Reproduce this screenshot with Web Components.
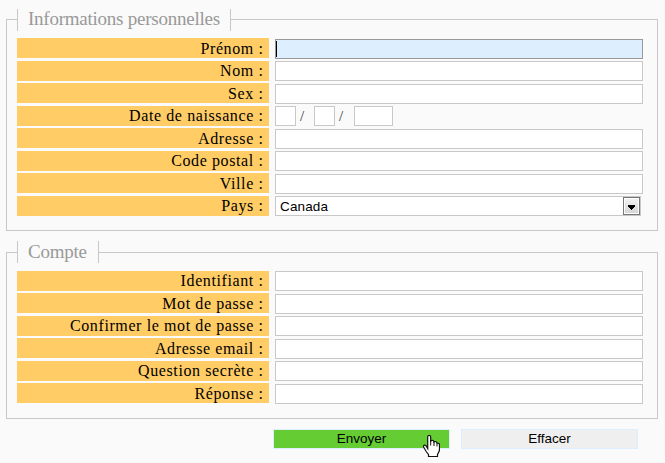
<!DOCTYPE html>
<html lang="fr">
<head>
<meta charset="utf-8">
<title>Inscription</title>
<style>
html,body{margin:0;background:#fafafa;width:665px;height:463px;overflow:hidden}
</style>
</head>
<body>
<signup-form></signup-form>
<script>
const define = (name, html, setup) => {
  const t = document.createElement('template');
  t.innerHTML = html;
  customElements.define(name, class extends HTMLElement {
    constructor() {
      super();
      this.attachShadow({mode: 'open'}).appendChild(t.content.cloneNode(true));
    }
    connectedCallback() { if (setup) setup(this, this.shadowRoot); }
  });
};

define('text-field', `
<style>
:host{display:block;position:relative;width:368px;height:20px}
input{display:block;box-sizing:border-box;width:100%;height:100%;margin:0;padding:0 4px;border:1px solid #c8c8c8;border-radius:0;background:#fff;outline:0;font:13.5px "Liberation Sans",Arial,sans-serif}
i{display:none}
:host([active]) input{border-color:#999;background:#def}
:host([active]) i{display:block;position:absolute;left:1px;top:2px;width:1px;height:16px;background:#000}
</style><input type="text"><i></i>`);

define('date-field', `
<style>
:host{display:flex;height:20px;font:15px/20px "Liberation Serif",serif;color:#333}
.s{width:21px}.l{width:39px}
span{width:18px;box-sizing:border-box;padding-left:4px}
span+text-field+span{width:19px}
</style><text-field class="s"></text-field><span>/</span><text-field class="s"></text-field><span>/</span><text-field class="l"></text-field>`);

define('select-field', `
<style>
:host{display:flex;box-sizing:border-box;width:366px;height:20px;border:1px solid #c8c8c8;background:#fff;justify-content:space-between;font:13.5px/19px "Liberation Sans",Arial,sans-serif;color:#000;padding-left:4px}
.v{letter-spacing:.15px}
b{display:block;box-sizing:border-box;width:17px;height:18px;border:1px solid #777;background:linear-gradient(#f4f4f4,#d4d4d4);box-shadow:inset 0 0 0 1px #fff}
svg{display:block}
</style><span class="v"><slot></slot></span><b><svg width="15" height="16" shape-rendering="crispEdges"><path d="M4 7h7v2h-1v1h-1v1h-1v1h-1v-1h-1v-1h-1v-1h-1z"/></svg></b>`);

define('form-row', `
<style>
:host{display:flex;gap:6px;height:22px;align-items:flex-start}
:host([half]){height:23px}
:host([half]) ::slotted(*){margin-top:1px}
label{display:block;box-sizing:border-box;width:252px;height:20px;padding-right:5.500px;background:#fc6;color:#000;text-align:right;font:16px/20px "Liberation Serif","Times New Roman",serif;letter-spacing:.6px;white-space:nowrap}
:host([half]) label{line-height:22px}
</style><label></label><slot></slot>`, (el, root) => {
  root.querySelector('label').textContent = el.getAttribute('label') + ' :';
});

define('field-group', `
<style>
:host{display:block;box-sizing:border-box;width:652px}
fieldset{box-sizing:border-box;width:100%;height:100%;min-width:0;margin:0;padding:0 10px;border:1px solid #c8c8c8}
legend{box-sizing:border-box;height:22px;width:var(--legend);padding:0 0 0 10px;border:solid #c8c8c8;border-width:0 1px;color:#999;font:19px/var(--line) "Liberation Serif","Times New Roman",serif;letter-spacing:-.24px;white-space:nowrap}
div{padding-top:var(--gap)}
</style><fieldset><legend></legend><div><slot></slot></div></fieldset>`, (el, root) => {
  root.querySelector('legend').textContent = el.getAttribute('heading');
});

define('form-button', `
<style>
:host{display:block;width:177px;height:20px}
button{display:block;box-sizing:border-box;width:100%;height:100%;margin:0;padding:0;border:1px solid #def;border-radius:0;background:#efefef;color:#000;font:13.5px/18px "Liberation Sans",Arial,sans-serif}
:host([hovered]) button{background:#6c3}
</style><button type="button"><slot></slot></button>`);

define('hand-pointer', `
<style>
:host{display:block;position:absolute;width:17px;height:22px}
svg{display:block}
</style>
<svg width="17" height="22" viewBox="0 0 17 22">
<path d="M4.700 13.500V2Q4.700.5 6.200 .5Q7.700.5 7.700 2V6Q9 5.100 10 5.500Q11 6 11 7Q12 6.200 13 6.700Q14 7.200 14 8.200Q16.500 7.800 16.500 10V14.500Q16.500 16 15.500 17.500L14.500 19.500V21.500H5.500V19.500L3.500 17L1 12.800Q.2 11.500 .6 10.600Q1.600 9.500 3 10.600Z" fill="#fff" stroke="#111" stroke-width="1.200"/>
<path d="M7.700 6V10.500M11 7V11M14 8.500V11.500" fill="none" stroke="#111"/>
</svg>`);

define('signup-form', `
<style>
:host{display:block;box-sizing:border-box;width:665px;height:463px;padding:8.6px 0 0 6px;background:#fafafa}
.a{height:222px;--legend:214px;--gap:7.4px;--line:19px}
.b{height:178px;margin-top:10.8px;--legend:82px;--gap:7.6px;--line:21px}
.actions{display:flex;gap:11px;padding:9.6px 0 0 267px}
hand-pointer{left:423px;top:435px}
</style>
<field-group class="a" heading="Informations personnelles">
<form-row half label="Prénom"><text-field active></text-field></form-row>
<form-row label="Nom"><text-field></text-field></form-row>
<form-row half label="Sex"><text-field></text-field></form-row>
<form-row label="Date de naissance"><date-field></date-field></form-row>
<form-row half label="Adresse"><text-field></text-field></form-row>
<form-row label="Code postal"><text-field></text-field></form-row>
<form-row half label="Ville"><text-field></text-field></form-row>
<form-row label="Pays"><select-field>Canada</select-field></form-row>
</field-group>
<field-group class="b" heading="Compte">
<form-row label="Identifiant"><text-field></text-field></form-row>
<form-row half label="Mot de passe"><text-field></text-field></form-row>
<form-row label="Confirmer le mot de passe"><text-field></text-field></form-row>
<form-row half label="Adresse email"><text-field></text-field></form-row>
<form-row label="Question secrète"><text-field></text-field></form-row>
<form-row half label="Réponse"><text-field></text-field></form-row>
</field-group>
<div class="actions"><form-button hovered>Envoyer</form-button><form-button>Effacer</form-button></div>
<hand-pointer></hand-pointer>`);
</script>
</body>
</html>
